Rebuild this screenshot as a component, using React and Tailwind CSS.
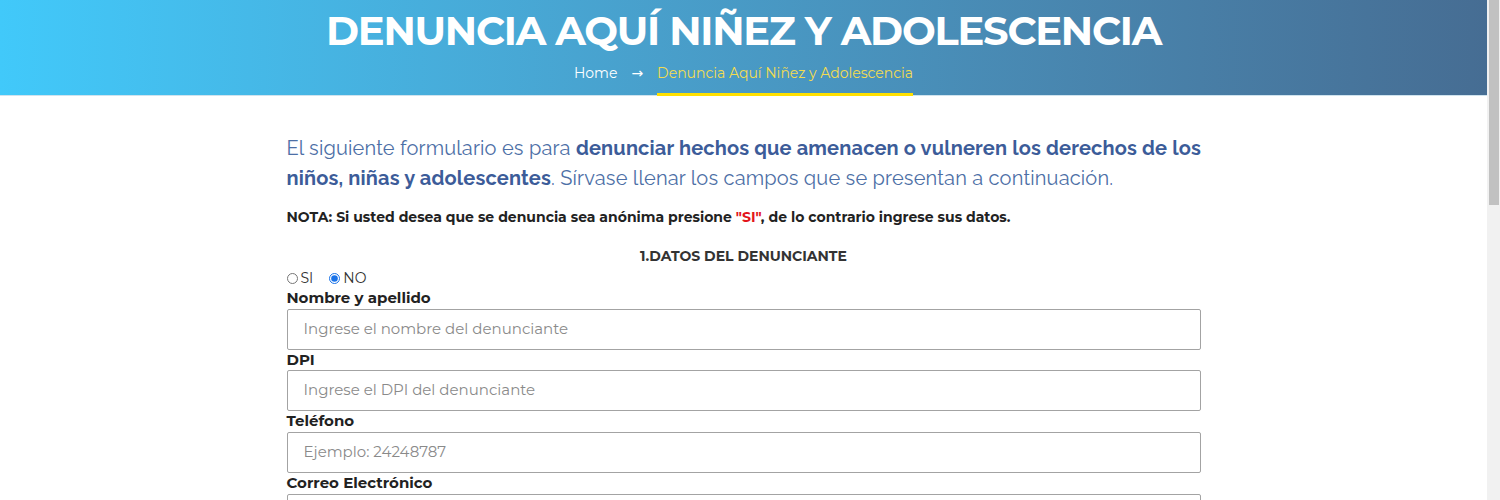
import { useState } from "react";

const fields = [
  { label: "Nombre y apellido", placeholder: "Ingrese el nombre del denunciante" },
  { label: "DPI", placeholder: "Ingrese el DPI del denunciante" },
  { label: "Teléfono", placeholder: "Ejemplo: 24248787" },
  { label: "Correo Electrónico", placeholder: "Ingrese el correo del denunciante" },
];

function Header() {
  return (
    <div className="h-[96px] border-b border-[#cfe3ee] bg-gradient-to-r from-[#41c9fa] to-[#466d93] text-center">
      <h1 className="pt-[7px] text-[40px] font-bold leading-[48px] tracking-[-1.2px] text-white">
        DENUNCIA AQUÍ NIÑEZ Y ADOLESCENCIA
      </h1>
      <div className="mt-[8px] flex items-start justify-center gap-[14px] text-[14px] leading-[20px]">
        <span className="text-white">Home</span>
        <span className="text-white" style={{ fontFamily: "'DejaVu Sans', sans-serif" }}>→</span>
        <span className="border-b-[3px] border-[#ffe000] pb-[10px] text-[#f3dc4f]">
          Denuncia Aquí Niñez y Adolescencia
        </span>
      </div>
    </div>
  );
}

export default function App() {
  const [anonymous, setAnonymous] = useState("NO");

  return (
    <div className="flex h-[500px] overflow-hidden bg-white" style={{ fontFamily: "Montserrat, 'Open Sans', 'Liberation Sans', sans-serif" }}>
      <div className="min-w-0 flex-1">
        <Header />
        <div className="mx-auto w-[914px] pt-[37px]">
          <p className="text-[20px] leading-[30px] tracking-[0.16px] text-[#4d6fa6]" style={{ fontFamily: "Raleway, Lato, 'Liberation Sans', sans-serif" }}>
            <span className="block whitespace-nowrap">
              El siguiente formulario es para{" "}
              <b className="font-bold text-[#3c5c99]">denunciar hechos que amenacen o vulneren los derechos de los</b>
            </span>
            <span className="block whitespace-nowrap">
              <b className="font-bold text-[#3c5c99]">niños, niñas y adolescentes</b>. Sírvase llenar los campos que se presentan a continuación.
            </span>
          </p>
          <p className="mt-[14px] text-[14px] font-bold leading-[20px] text-[#222]">
            NOTA: Si usted desea que se denuncia sea anónima presione <span className="text-[#e3141b]">"SI"</span>, de lo contrario ingrese sus datos.
          </p>
          <h3 className="mt-[19px] text-center text-[14px] font-bold leading-[20px] text-[#333]">1.DATOS DEL DENUNCIANTE</h3>
          <div className="mt-[2px] flex items-center gap-[16px] text-[14px] leading-[20px] text-[#333]">
            {["SI", "NO"].map((opt) => (
              <label key={opt} className="flex items-center gap-[3px]">
                <input
                  type="radio"
                  name="anon"
                  checked={anonymous === opt}
                  onChange={() => setAnonymous(opt)}
                  className="m-0 h-[11px] w-[11px] accent-[#1a73e8]"
                />
                {opt}
              </label>
            ))}
          </div>
          {fields.map((f) => (
            <div key={f.label}>
              <label className="block text-[15px] font-bold leading-[20.7px] text-[#222]">{f.label}</label>
              <input
                type="text"
                placeholder={f.placeholder}
                className="block h-[41px] w-full rounded-[2px] border border-[#a3a3a3] px-[16px] pb-[2px] text-[15px] text-[#333] placeholder:text-[#8a8a8a] outline-none"
              />
            </div>
          ))}
        </div>
      </div>
      <div className="flex w-[13px] flex-col bg-[#f1f1f1] pl-[2px]">
        <div className="h-[205px] w-[10px] bg-[#c1c1c1]" />
      </div>
    </div>
  );
}
